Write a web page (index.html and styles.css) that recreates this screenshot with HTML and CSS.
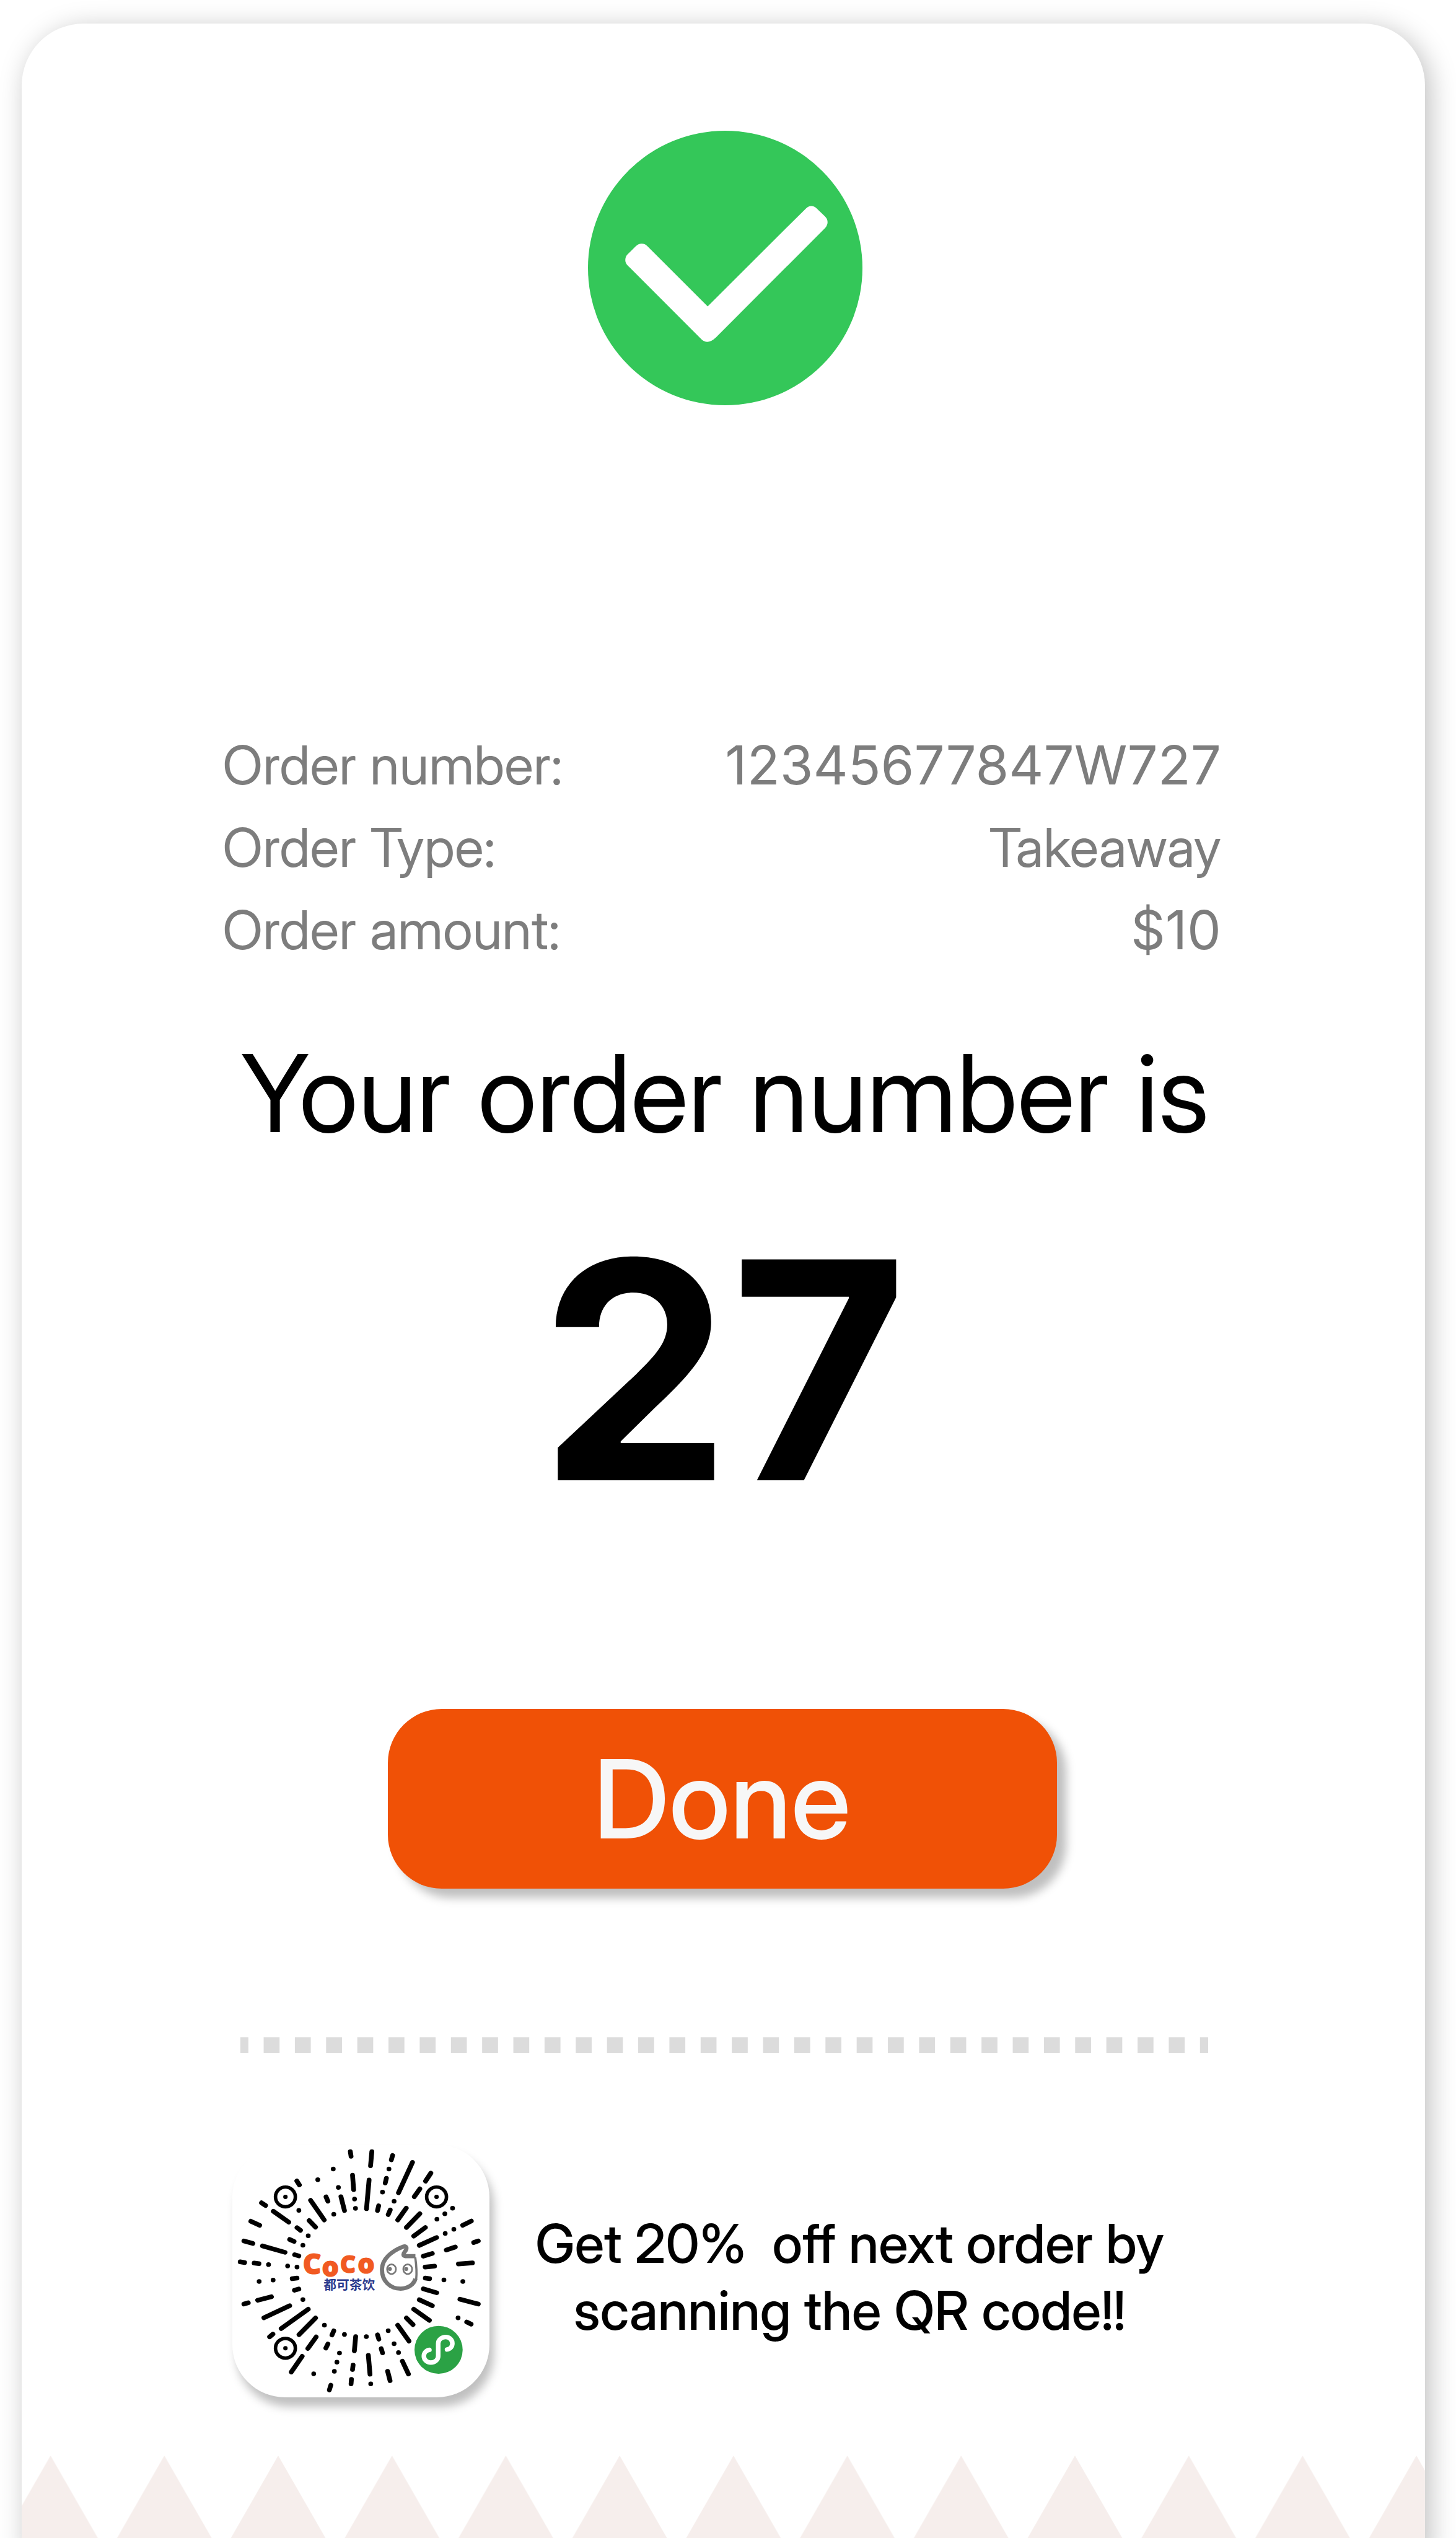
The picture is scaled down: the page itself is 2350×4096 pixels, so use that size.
FILE: index.html
```html
<!DOCTYPE html>
<html lang="en">
<head>
<meta charset="utf-8">
<meta name="viewport" content="width=device-width, initial-scale=1">
<title>Order confirmed</title>
<link rel="stylesheet" href="styles.css">
</head>
<body>
<div class="page">
  <main class="receipt">
    <svg class="status-icon" viewBox="0 0 1346 1346" role="img" aria-label="Success">
      <circle cx="673" cy="673" r="673" fill="#34c759"/>
      <path transform="translate(-111 -107)" fill="#fff" d="M345 674Q358 661 374 661Q392 661 403 674L698 968L1180 488Q1192 476 1206 476Q1221 476 1233 488L1274 528Q1286 541 1286 555Q1286 570 1274 584L738 1121Q716 1142 696 1142Q681 1142 668 1130L305 767Q294 756 294 741Q294 725 305 713Z"/>
    </svg>

    <dl class="details">
      <div class="details-row"><dt>Order number:</dt><dd class="figure">12345677847W727</dd></div>
      <div class="details-row"><dt>Order Type:</dt><dd>Takeaway</dd></div>
      <div class="details-row"><dt>Order amount:</dt><dd class="figure">$10</dd></div>
    </dl>

    <h1 class="title">Your order number is</h1>
    <p class="ticket">27</p>

    <button class="done" type="button">Done</button>

    <div class="divider"></div>

    <section class="promo">
      <div class="qr">
        <svg class="qr-code" viewBox="36 24 660 648" role="img" aria-label="CoCo mini program code">
          <g transform="scale(.47194 .45918)">
            <path fill="none" stroke="#000" stroke-width="26" stroke-linecap="round" d="M718 91L722 117M835 91L828 170M948 112L941 137M928 188h.1M914 240L908 266M893 317h.1M1056 151L980 321M1156 211L1127 256M1096 299L1066 343M730 223L736 303M820 250L806 410M741 356h.1M746 408h.1M667 343L686 420M625 188h.1M541 248h.1M653 291h.1M628 441h.1M586 344L596 368M502 363L576 473M427 255L441 277M438 419h.1M235 377L257 392M299 424L383 485M177 480L225 503M139 590L188 604M240 618L363 654M428 516L447 531M494 476L529 513M489 561h.1M460 614h.1M388 582L412 593M415 667L438 674M119 707L143 711M195 714L221 717M273 722h.1M377 730h.1M428 736h.1M222 817h.1M298 809h.1M402 801L428 798M414 866L438 859M460 918h.1M139 943L163 936M214 922L289 902M248 1020L388 952M342 1080L489 972M439 1114L529 1021M279 1126L297 1111M577 1061h.1M628 1093L618 1116M532 1127L487 1191M596 1166L585 1189M659 1217h.1M645 1268h.1M631 1319h.1M456 1235L397 1323M519 1333h.1M612 1396L604 1423M686 1113h.1M747 1125L740 1204M805 1125h.1M733 1284L730 1309M724 1364L722 1389M816 1230L825 1335M829 1389h.1M866 1115L873 1139M924 1092h.1M886 1192L893 1216M956 1165h.1M980 1214h.1M976 1061L1037 1150M1001 1262L1034 1334M921 1319L934 1371M1023 1021L1059 1058M1063 972L1148 1034M1093 919L1164 952M1115 858L1188 880M1126 798L1149 801M1227 808h.1M1330 817h.1M1314 916L1414 943M1304 1020h.1M1351 1043L1375 1055M1125 736L1176 731M1306 719L1382 713M1115 675L1164 660M1240 641L1289 624M1389 599L1414 590M1093 615L1187 571M1234 548h.1M1281 525h.1M1329 503L1376 479M1063 563L1126 515M1023 515L1096 438M976 473L1022 407M956 368h.1M872 394L866 420M935 417L924 443M1189 469h.1M1232 438h.1M1274 407h.1"/>
            <g fill="none" stroke="#000" stroke-width="19">
              <ellipse cx="365" cy="344" rx="54" ry="55"/>
              <ellipse cx="1187" cy="344" rx="54" ry="55"/>
              <ellipse cx="365" cy="1190" rx="54" ry="55"/>
            </g>
            <circle cx="365" cy="344" r="12"/>
            <circle cx="1187" cy="344" r="12"/>
            <circle cx="365" cy="1190" r="12"/>
            <ellipse cx="1198" cy="1199" rx="131" ry="134" fill="#2ba245"/>
            <path fill="none" stroke="#fff" stroke-width="25" stroke-linecap="round" d="M1244 1197C1262 1194 1273 1180 1273 1163C1273 1143 1257 1127 1237 1127C1214 1127 1196 1143 1196 1163L1196 1234C1196 1254 1178 1270 1156 1270C1135 1270 1118 1255 1118 1234C1118 1216 1130 1202 1148 1199"/>
            <g fill="none" stroke="#777">
              <path stroke-width="23" d="M1072 675L1016 675C1004 673 1005 661 1014 651C1030 632 1024 615 1005 622C945 645 890 690 890 750C890 815 935 857 992 857C1030 857 1062 836 1072 802"/>
              <path stroke-width="12" d="M1076 808C1080 770 1078 730 1071 682"/>
              <ellipse cx="942" cy="748" rx="24" ry="27" stroke-width="9"/>
              <ellipse cx="1030" cy="748" rx="24" ry="27" stroke-width="9"/>
            </g>
            <circle cx="933" cy="747" r="11" fill="#777"/>
            <circle cx="1022" cy="747" r="11" fill="#777"/>
          </g>
          <text class="logo-word"><tspan x="218" y="355" font-size="69">C</tspan><tspan x="267" y="360" font-size="66">o</tspan><tspan x="314" y="351" font-size="58">C</tspan><tspan x="359" y="353" font-size="66">o</tspan></text>
          <text class="logo-sub" x="270" y="396">都可茶饮</text>
        </svg>
      </div>
      <p class="promo-text">Get 20%&nbsp; off next order by<br>scanning the QR code!!</p>
    </section>

    <svg class="edge" viewBox="0 0 3600 256" aria-hidden="true">
      <defs>
        <pattern id="tooth" x="-72" y="0" width="292" height="256" patternUnits="userSpaceOnUse">
          <path d="M146 0L293 256H-1Z" fill="#f6eeec"/>
        </pattern>
      </defs>
      <rect width="3600" height="256" fill="url(#tooth)"/>
    </svg>
  </main>
</div>
</body>
</html>
```
FILE: styles.css
```css
* {
  box-sizing: border-box;
  margin: 0;
  padding: 0;
}

body {
  background: #fff;
  color: #000;
  font-family: "Inter Display", Inter, "Liberation Sans", sans-serif;
}

.page {
  min-height: 100vh;
  padding: 38px 50px 0 35px;
  overflow: hidden;
}

.receipt {
  display: flex;
  flex-direction: column;
  align-items: center;
  margin-bottom: -28px;
  padding-top: 173px;
  border-radius: 100px 100px 0 0;
  background: #fff;
  box-shadow: 8px 8px 44px rgba(0, 0, 0, 0.25);
}

.status-icon {
  width: 443px;
  height: 443px;
  margin-left: 5px;
}

.details {
  align-self: stretch;
  margin: 514px 329px 0 324px;
  color: #7d7d7d;
  font-size: 87px;
  line-height: 133px;
}

.details-row {
  display: flex;
  justify-content: space-between;
}

.figure,
.ticket {
  font-family: Inter, "Liberation Sans", sans-serif;
}

.title {
  margin-top: 91px;
  margin-left: 5px;
  font-size: 173px;
  font-weight: 400;
  line-height: 212px;
}

.ticket {
  margin-top: 46px;
  font-size: 490px;
  font-weight: 700;
  line-height: 590px;
}

.done {
  width: 1080px;
  height: 290px;
  margin-top: 252px;
  margin-right: 4px;
  border: 0;
  border-radius: 87px;
  background: #f05106;
  box-shadow: 15px 15px 15px rgba(0, 0, 0, 0.25);
  color: #f7f7f7;
  font-family: inherit;
  font-size: 176px;
  font-weight: 500;
  line-height: 212px;
}

.divider {
  align-self: stretch;
  height: 25px;
  margin: 240px 350px 0 353px;
  background: linear-gradient(90deg, #dcdcdc 25%, transparent 25% 75%, #dcdcdc 75%) 0 0 / calc(100% / 31) 100%;
}

.promo {
  display: flex;
  align-items: center;
  align-self: stretch;
  gap: 74px;
  margin-top: 148px;
  padding-left: 340px;
}

.qr {
  flex: none;
  width: 415px;
  height: 408px;
  border-radius: 85px;
  background: #fff;
  box-shadow: 7px 15px 15px rgba(0, 0, 0, 0.25);
}

.qr-code {
  display: block;
  width: 100%;
  height: 100%;
}

.logo-word {
  fill: #f15a22;
  stroke: #f15a22;
  stroke-width: 5px;
  stroke-linejoin: round;
  font-family: "Noto Sans", sans-serif;
  font-weight: 700;
}

.logo-sub {
  fill: #2c3c8e;
  font-family: "Noto Sans CJK SC", sans-serif;
  font-size: 33px;
  font-weight: 700;
}

.promo-text {
  padding-top: 20px;
  font-size: 87px;
  font-weight: 500;
  line-height: 108px;
  text-align: center;
  white-space: nowrap;
}

.edge {
  display: block;
  width: 100%;
  margin-top: 94px;
}
```
